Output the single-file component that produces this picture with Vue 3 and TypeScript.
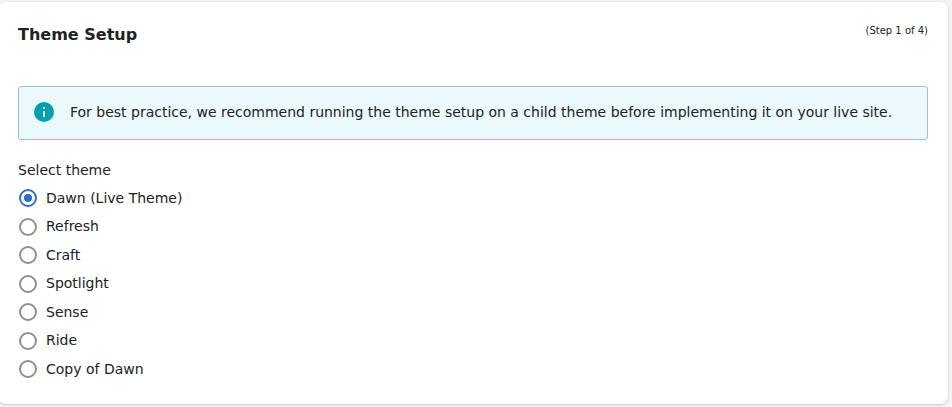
<script setup lang="ts">
import { ref } from 'vue'

const themes: string[] = ['Dawn (Live Theme)', 'Refresh', 'Craft', 'Spotlight', 'Sense', 'Ride', 'Copy of Dawn']
const selected = ref<string>(themes[0])
</script>

<template>
  <main class="page">
    <section class="card">
      <header class="header">
        <h1 class="title">Theme Setup</h1>
        <span class="step">(Step 1 of 4)</span>
      </header>
      <div class="banner">
        <svg class="info" viewBox="0 0 20 20">
          <circle cx="10" cy="10" r="10" fill="#00a0ac" />
          <rect x="9" y="9" width="2" height="6" fill="#ebf9fc" />
          <rect x="9" y="5" width="2" height="2" fill="#ebf9fc" />
        </svg>
        <p class="message">For best practice, we recommend running the theme setup on a child theme before implementing it on your live site.</p>
      </div>
      <div class="group" role="radiogroup">
        <div class="label">Select theme</div>
        <label v-for="theme in themes" :key="theme" class="choice">
          <input v-model="selected" class="radio" type="radio" name="theme" :value="theme" />
          <span class="name">{{ theme }}</span>
        </label>
      </div>
    </section>
  </main>
</template>

<style>
body {
  background: #f4f4f4;
}
</style>

<style scoped>
.page {
  box-sizing: border-box;
  height: 407px;
  padding: 2px 4px 3px 0;
  color: #202223;
  font: 14px/20px "DejaVu Sans", sans-serif;
}
.card {
  box-sizing: border-box;
  height: 402px;
  margin-left: -2px;
  padding: 21px 20px 0 20px;
  background: #fff;
  border-radius: 8px;
  box-shadow: 0 1px 2px rgba(0, 0, 0, 0.15), 0 0 5px rgba(23, 24, 24, 0.05);
}
.header {
  display: flex;
  justify-content: space-between;
  height: 63px;
}
.title {
  margin: 0;
  font-size: 16px;
  line-height: 24px;
}
.step {
  font-size: 10px;
  line-height: 16px;
}
.banner {
  box-sizing: border-box;
  display: flex;
  align-items: center;
  gap: 16px;
  height: 54px;
  padding: 0 15px 2px;
  border: 1px solid #93c5cc;
  border-radius: 3px;
  background: #ebf9fc;
}
.info {
  width: 20px;
  height: 20px;
}
.message {
  margin: 0;
  letter-spacing: -0.004px;
  white-space: nowrap;
}
.group {
  padding-top: 20px;
}
.label {
  height: 20px;
  margin-bottom: 4px;
}
.choice {
  display: flex;
  align-items: center;
  gap: 8px;
  height: 28.5px;
}
.name {
  padding-bottom: 0.9px;
}
.radio {
  appearance: none;
  box-sizing: border-box;
  width: 18px;
  height: 18px;
  margin: 0 1px;
  border: 2px solid #8c9196;
  border-radius: 50%;
  background: #fff;
}
.radio:checked {
  border-color: #2c6ecb;
  background: radial-gradient(circle, #2c6ecb 3.7px, #fff 4.3px);
}
</style>
